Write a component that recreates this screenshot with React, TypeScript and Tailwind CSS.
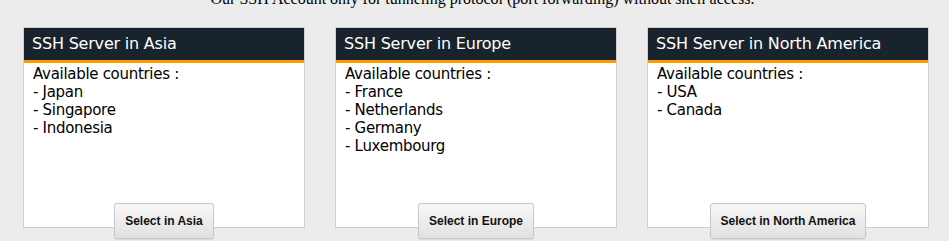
const servers = [
  { region: 'Asia', countries: ['Japan', 'Singapore', 'Indonesia'] },
  { region: 'Europe', countries: ['France', 'Netherlands', 'Germany', 'Luxembourg'] },
  { region: 'North America', countries: ['USA', 'Canada'] },
];

const ServerCard = ({ region, countries }: { region: string; countries: string[] }) => {
  return (
    <div className="flex flex-col h-[201px] border border-[#cfcfcf] bg-white">
      {/* Dark header with orange underline */}
      <div className="h-[35px] flex items-center bg-[#18232d] border-b-[3px] border-[#ff9900] pl-2 text-[16px] tracking-[-0.2px] text-white">
        SSH Server in {region}
      </div>
      <div className="px-[9px] pt-[2px] text-[15px] leading-[18px] tracking-[-0.3px] text-black">
        <div>Available countries :</div>
        {countries.map((c) => (
          <div key={c}>- {c}</div>
        ))}
      </div>
      <div className="mt-auto -mb-[12px] flex justify-center">
        <button className="h-[36px] px-[10px] rounded-[3px] border border-[#c8c8c8] bg-gradient-to-b from-[#f7f7f7] to-[#e1e1e1] font-['Liberation_Sans',Arial,sans-serif] font-bold text-[12px] text-[#111] shadow-[0_1px_1px_rgba(0,0,0,0.08)]">
          Select in {region}
        </button>
      </div>
    </div>
  );
};

export default function App() {
  return (
    <div className="w-[949px] h-[241px] overflow-hidden bg-[#ececec] font-['Tahoma','DejaVu_Sans',sans-serif]">
      <p className="-mt-[13px] pl-4 text-center font-['Liberation_Serif',serif] text-[16px] leading-6 text-black">
        Our SSH Account only for tunneling protocol (port forwarding) without shell access.
      </p>
      <div className="mt-4 grid grid-cols-3 gap-[30px] pl-[23px] pr-[20px]">
        {servers.map((s) => (
          <ServerCard key={s.region} region={s.region} countries={s.countries} />
        ))}
      </div>
    </div>
  );
}
